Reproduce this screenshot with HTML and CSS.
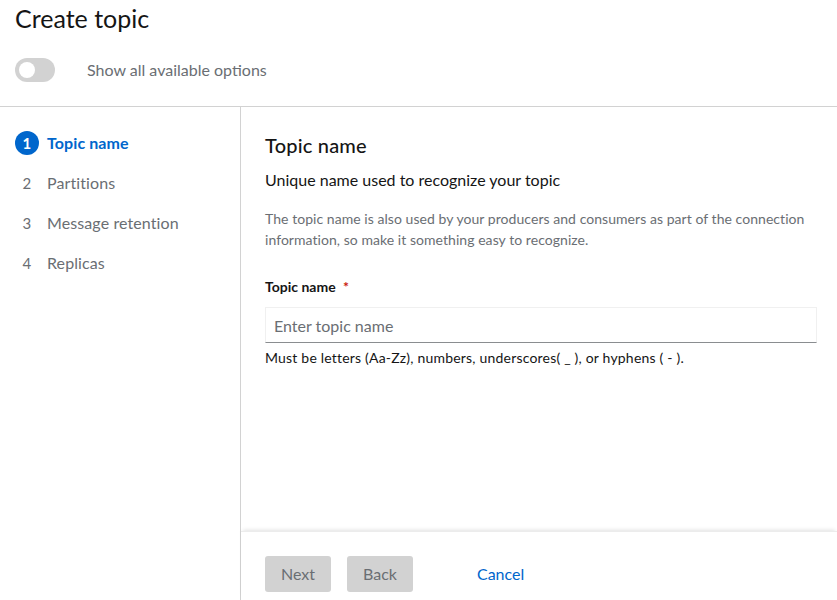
FILE: index.html
```html
<!DOCTYPE html>
<html lang="en">
<head>
<meta charset="utf-8">
<title>Create topic</title>
<link rel="stylesheet" href="styles.css">
</head>
<body>
<div class="page">
  <header class="header">
    <h1 class="title">Create topic</h1>
    <label class="switch-row">
      <span class="switch"><span class="knob"></span></span>
      <span class="switch-label">Show all available options</span>
    </label>
  </header>
  <div class="wizard">
    <nav class="nav">
      <ol class="steps">
        <li class="step current"><span class="num">1</span><span class="step-text">Topic name</span></li>
        <li class="step"><span class="num">2</span><span class="step-text">Partitions</span></li>
        <li class="step"><span class="num">3</span><span class="step-text">Message retention</span></li>
        <li class="step"><span class="num">4</span><span class="step-text">Replicas</span></li>
      </ol>
    </nav>
    <main class="main">
      <div class="content">
        <h2 class="heading">Topic name</h2>
        <p class="subtitle">Unique name used to recognize your topic</p>
        <p class="desc">The topic name is also used by your producers and consumers as part of the connection information, so make it something easy to recognize.</p>
        <div class="field">
          <label class="field-label" for="topic">Topic name <span class="req">*</span></label>
          <input class="input" id="topic" type="text" placeholder="Enter topic name">
          <div class="helper">Must be letters (Aa-Zz), numbers, underscores( _ ), or hyphens ( - ).</div>
        </div>
      </div>
      <footer class="footer">
        <button class="btn btn-disabled" type="button">Next</button>
        <button class="btn btn-disabled" type="button">Back</button>
        <button class="btn btn-link" type="button">Cancel</button>
      </footer>
    </main>
  </div>
</div>
</body>
</html>
```
FILE: styles.css
```css
* { box-sizing: border-box; }
html, body { margin: 0; padding: 0; }
body {
  font-family: Lato, "Open Sans", "Liberation Sans", sans-serif;
  color: #151515;
  background: #fff;
  width: 837px;
  height: 600px;
  overflow: hidden;
}
.page { display: flex; flex-direction: column; height: 600px; }
.header {
  padding: 3px 16px 24px 15px;
  border-bottom: 1px solid #d2d2d2;
}
.title {
  margin: 0;
  font-size: 25px;
  line-height: 30px;
  font-weight: 400;
  color: #151515;
}
.switch-row {
  display: flex;
  align-items: center;
  margin-top: 25px;
  gap: 32px;
}
.switch {
  width: 40px;
  height: 24px;
  border-radius: 12px;
  background: #d2d2d2;
  display: flex;
  align-items: center;
  padding-left: 4px;
}
.knob {
  width: 16px;
  height: 16px;
  border-radius: 50%;
  background: #fff;
}
.switch-label {
  font-size: 16px;
  line-height: 24px;
  color: #6a6e73;
}
.wizard { flex: 1; display: flex; min-height: 0; }
.nav {
  width: 241px;
  border-right: 1px solid #d2d2d2;
  padding: 16px 0 0 15px;
}
.steps { list-style: none; margin: 0; padding: 0; }
.step {
  display: flex;
  align-items: center;
  gap: 8px;
  padding: 8px 0;
  font-size: 16px;
  line-height: 24px;
  color: #6a6e73;
  letter-spacing: 0.1px;
}
.num {
  width: 24px;
  height: 24px;
  border-radius: 50%;
  display: flex;
  align-items: center;
  justify-content: center;
  font-size: 15px;
}
.current .num {
  background: #0066cc;
  color: #fff;
  font-weight: 700;
}
.current .step-text { color: #0066cc; font-weight: 700; }
.main { flex: 1; display: flex; flex-direction: column; min-width: 0; }
.content { flex: 1; padding: 25px 20px 0 24px; }
.heading {
  margin: 0;
  font-size: 20px;
  line-height: 26px;
  font-weight: 500;
  color: #151515;
  letter-spacing: 0.2px;
}
.subtitle {
  margin: 10px 0 0;
  font-size: 16px;
  line-height: 24px;
}
.desc {
  margin: 16px 0 0;
  font-size: 14px;
  line-height: 21px;
  color: #6a6e73;
  letter-spacing: 0.05px;
}
.field { margin-top: 26px; }
.field-label {
  display: block;
  font-size: 14px;
  line-height: 21px;
  font-weight: 700;
}
.req { color: #c9190b; margin-left: 4px; }
.input {
  display: block;
  width: 100%;
  height: 36px;
  margin-top: 10px;
  padding: 5px 8px;
  font-family: inherit;
  font-size: 16px;
  color: #151515;
  border: 1px solid #f0f0f0;
  border-bottom-color: #8a8d90;
  background: #fff;
  outline: none;
}
.input::placeholder { color: #6a6e73; }
.helper {
  margin-top: 4px;
  font-size: 14px;
  line-height: 21px;
  letter-spacing: 0.2px;
}
.footer {
  display: flex;
  align-items: center;
  padding: 24px 24px 8px 24px;
  box-shadow: 0 -3px 4px -2px rgba(3,3,3,0.12);
  border-top: 1px solid #ececec;
}
.btn {
  font-family: inherit;
  font-size: 16px;
  line-height: 24px;
  padding: 6px 16px;
  border: 0;
  border-radius: 3px;
  margin-right: 16px;
  cursor: pointer;
}
.btn-disabled { background: #d2d2d2; color: #6a6e73; }
.btn-link { background: transparent; color: #0066cc; margin-left: 32px; }
```
